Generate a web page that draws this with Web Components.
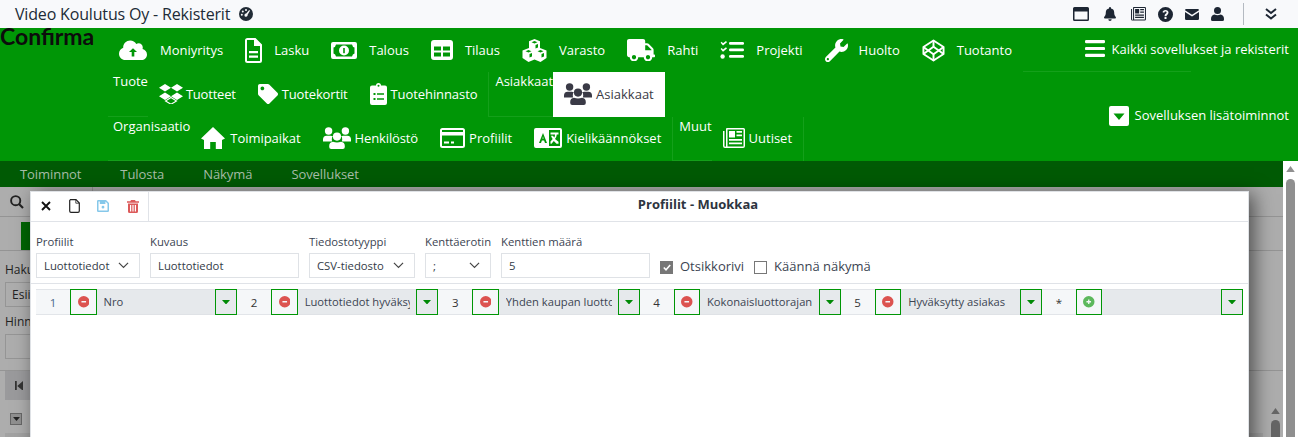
<!DOCTYPE html>
<html lang="fi">
<head>
<meta charset="utf-8">
<title>Profiilit - Muokkaa</title>
<style>
  html, body { margin: 0; height: 437px; overflow: hidden; background: #fff; }
  body { font-family: "Open Sans", sans-serif; font-size: 13px; color: #212b36; position: relative; }
</style>
</head>
<body>
<top-bar></top-bar>
<ribbon-menu>
  <ribbon-row slot="rows">
    <ribbon-item icon="cloud" w="28" gap="13">Moniyritys</ribbon-item>
    <ribbon-item icon="file" w="17" gap="12">Lasku</ribbon-item>
    <ribbon-item icon="money" w="26" gap="12">Talous</ribbon-item>
    <ribbon-item icon="table" w="22" gap="12">Tilaus</ribbon-item>
    <ribbon-item icon="cubes" w="25" gap="12">Varasto</ribbon-item>
    <ribbon-item icon="truck" w="28" gap="12">Rahti</ribbon-item>
    <ribbon-item icon="tasks" w="24" gap="12">Projekti</ribbon-item>
    <ribbon-item icon="wrench" w="23" gap="11">Huolto</ribbon-item>
    <ribbon-item icon="codepen" w="23" gap="12">Tuotanto</ribbon-item>
  </ribbon-row>
  <ribbon-row slot="rows">
    <ribbon-group indent="5">
      <span slot="label">Tuote</span>
      <ribbon-item icon="dropbox" w="24" gap="3" style="letter-spacing:-.2px">Tuotteet</ribbon-item>
      <ribbon-item icon="tag" w="20" gap="4" style="letter-spacing:-.15px">Tuotekortit</ribbon-item>
      <ribbon-item icon="clipboard" w="17" gap="4" style="letter-spacing:-.08px">Tuotehinnasto</ribbon-item>
    </ribbon-group>
    <ribbon-group indent="6" divider>
      <span slot="label">Asiakkaat</span>
      <ribbon-item icon="users" w="28" gap="4" active>Asiakkaat</ribbon-item>
    </ribbon-group>
  </ribbon-row>
  <ribbon-row slot="rows">
    <ribbon-group indent="5">
      <span slot="label">Organisaatio</span>
      <ribbon-item icon="home" w="24" gap="5" style="padding-bottom:2px;letter-spacing:-.05px">Toimipaikat</ribbon-item>
      <ribbon-item icon="users" w="28" gap="4" style="padding-bottom:2px;letter-spacing:-.12px">Henkilöstö</ribbon-item>
      <ribbon-item icon="card" w="25" gap="4" style="padding-bottom:2px">Profiilit</ribbon-item>
      <ribbon-item icon="language" w="28" gap="4" style="padding-bottom:2px">Kielikäännökset</ribbon-item>
    </ribbon-group>
    <ribbon-group indent="6" divider closing>
      <span slot="label">Muut</span>
      <ribbon-item icon="news" w="22" gap="4" style="padding-bottom:2px">Uutiset</ribbon-item>
    </ribbon-group>
  </ribbon-row>
  <ribbon-side slot="side"></ribbon-side>
</ribbon-menu>
<tab-bar></tab-bar>
<page-behind></page-behind>
<page-scrollbar></page-scrollbar>
<edit-dialog></edit-dialog>

<script>
// icon set, all filled with currentColor unless the markup says otherwise
const ICONS = {
  cloud: ['0 0 640 512', '<path fill-rule="evenodd" d="M537.6 226.6c4.1-10.7 6.4-22.4 6.4-34.6 0-53-43-96-96-96-19.7 0-38.1 6-53.3 16.2C367 64.2 315.3 32 256 32c-88.4 0-160 71.6-160 160 0 2.7.1 5.4.2 8.1C40.2 219.8 0 273.2 0 336c0 79.5 64.5 144 144 144h368c70.7 0 128-57.3 128-128 0-61.9-44-113.6-102.4-125.4zM320 210L412 300H350V400H290V300H228Z"/>'],
  file: ['0 0 17 25', '<path fill-rule="evenodd" d="M2.5 0H10.5L17 6.5V22.5A2.5 2.5 0 0 1 14.5 25H2.5A2.5 2.5 0 0 1 0 22.5V2.5A2.5 2.5 0 0 1 2.5 0ZM2 2V23H15V8H9V2ZM4 13H13V15.2H4ZM4 17.5H13V19.7H4Z"/>'],
  money: ['0 0 26 17', '<path fill-rule="evenodd" d="M2 0H24A2 2 0 0 1 26 2V15A2 2 0 0 1 24 17H2A2 2 0 0 1 0 15V2A2 2 0 0 1 2 0ZM5 2.5Q4.5 5 2.5 5.5V11.5Q4.5 12 5 14.5H21Q21.5 12 23.5 11.5V5.5Q21.5 5 21 2.5ZM13 3.5A5 5 0 0 1 13 13.5A5 5 0 0 1 13 3.5Z"/><rect x="12.2" y="6" width="1.6" height="5.2" fill="#009606"/>'],
  table: ['0 0 22 20', '<path fill-rule="evenodd" d="M3 0H19A3 3 0 0 1 22 3V17A3 3 0 0 1 19 20H3A3 3 0 0 1 0 17V3A3 3 0 0 1 3 0ZM3 6.5V10.5H10V6.5ZM12 6.5V10.5H19V6.5ZM3 12.5V16.5H10V12.5ZM12 12.5V16.5H19V12.5Z"/>'],
  cubes: ['0 0 25 23', '<path fill-rule="evenodd" d="M12.5 0L18 2.2V9L24.5 11.5V19L18.5 23L12.5 20.5L6.5 23L.5 19V11.5L7 9V2.2ZM12.5 2L9.5 3.2L12.5 4.4L15.5 3.2ZM13.5 6V9.5L16 8.5V5ZM6.5 11L3.5 12.2L6.5 13.4L9.5 12.2ZM18.5 11L15.5 12.2L18.5 13.4L21.5 12.2ZM7.5 15V18.5L10 17.5V14ZM19.5 15V18.5L22 17.5V14Z"/>'],
  truck: ['0 0 640 512', '<path d="M624 352h-16V243.9c0-12.7-5.1-24.9-14.1-33.9L494 110.1c-9-9-21.2-14.1-33.9-14.1H416V48c0-26.5-21.5-48-48-48H48C21.5 0 0 21.5 0 48v320c0 26.5 21.5 48 48 48h16c0 53 43 96 96 96s96-43 96-96h128c0 53 43 96 96 96s96-43 96-96h48c8.8 0 16-7.2 16-16v-32c0-8.8-7.2-16-16-16zM160 464c-26.5 0-48-21.5-48-48s21.5-48 48-48 48 21.5 48 48-21.5 48-48 48zm320 0c-26.5 0-48-21.5-48-48s21.5-48 48-48 48 21.5 48 48-21.5 48-48 48zm80-208H416V144h44.1l99.9 99.9V256z"/>'],
  tasks: ['0 0 24 18', '<path d="M.6 1.7L1.7.8L3 2.2L6 0L7 1.2L3 4.6ZM.6 7.9L1.7 7L3 8.4L6 6.2L7 7.4L3 10.8Z"/><circle cx="2.6" cy="15.5" r="2.2"/><rect x="9" y="1" width="15" height="2.8" rx="1.2"/><rect x="9" y="7.5" width="15" height="2.8" rx="1.2"/><rect x="9" y="14" width="15" height="2.8" rx="1.2"/>'],
  wrench: ['0 0 512 512', '<path d="M507.73 109.1c-2.24-9.03-13.54-12.09-20.12-5.51l-74.36 74.36-67.88-11.31-11.31-67.88 74.36-74.36c6.62-6.62 3.43-17.9-5.66-20.16-47.38-11.74-99.55.91-136.58 37.93-39.64 39.64-50.55 97.1-34.05 147.2L18.74 402.76c-24.99 24.99-24.99 65.51 0 90.5 24.99 24.99 65.51 24.99 90.5 0l213.21-213.21c50.12 16.71 107.47 5.68 147.37-34.22 37.07-37.07 49.7-89.32 37.91-136.73zM64 472c-13.25 0-24-10.75-24-24 0-13.26 10.75-24 24-24s24 10.74 24 24c0 13.25-10.75 24-24 24z"/>'],
  codepen: ['0 0 24 24', '<g fill="none" stroke="currentColor" stroke-width="2" stroke-linejoin="round"><path d="M12 1.5L22.5 8.3V15.7L12 22.5L1.5 15.7V8.3Z"/><path d="M12 8L17.5 12L12 16L6.5 12Z"/><path d="M12 1.5V8M12 16V22.5M1.5 8.3L6.5 12L1.5 15.7M22.5 8.3L17.5 12L22.5 15.7"/></g>'],
  dropbox: ['0 0 24 20', '<path d="M6 0L12 3.8L6 7.6L0 3.8ZM18 0L24 3.8L18 7.6L12 3.8ZM6 8.4L12 12.2L6 16L0 12.2ZM18 8.4L24 12.2L18 16L12 12.2Z"/><path d="M12 13.5L17.5 17L12 20.3L6.5 17Z" fill="none" stroke="currentColor" stroke-width="1.1"/>'],
  tag: ['0 0 512 512', '<path d="M0 252.118V48C0 21.49 21.49 0 48 0h204.118a48 48 0 0 1 33.941 14.059l211.882 211.882c18.745 18.745 18.745 49.137 0 67.882L293.823 497.941c-18.745 18.745-49.137 18.745-67.882 0L14.059 286.059A48 48 0 0 1 0 252.118zM112 64c-26.51 0-48 21.49-48 48s21.49 48 48 48 48-21.49 48-48-21.49-48-48-48z"/>'],
  clipboard: ['0 0 17 22', '<path fill-rule="evenodd" d="M6 2.5Q6 0 8.5 0T11 2.5H15A2 2 0 0 1 17 4.5V20A2 2 0 0 1 15 22H2A2 2 0 0 1 0 20V4.5A2 2 0 0 1 2 2.5ZM8.5 1.7A1 1 0 0 0 8.5 3.7A1 1 0 0 0 8.5 1.7ZM3.5 10V12H5.5V10ZM7 10.3V11.7H14V10.3ZM3.5 15V17H5.5V15ZM7 15.3V16.7H14V15.3Z"/>'],
  users: ['0 0 28 22', '<circle cx="5.6" cy="4" r="3.7"/><circle cx="22.4" cy="4" r="3.7"/><circle cx="14" cy="9.6" r="4.1"/><path d="M0 14.6V12.6Q0 8.8 3.6 8.8H7.8Q9 8.8 9.8 9.3Q8.8 10.5 8.8 12.2Q8.8 13.4 9.2 14.6ZM28 14.6V12.6Q28 8.8 24.4 8.8H20.2Q19 8.8 18.2 9.3Q19.2 10.5 19.2 12.2Q19.2 13.4 18.8 14.6Z"/><path d="M6.2 20V19Q6.2 15.2 10 14.8Q14 16.3 18 14.8Q21.8 15.2 21.8 19V20Q21.8 22 19.8 22H8.2Q6.2 22 6.2 20Z"/>'],
  home: ['0 0 24 22', '<path d="M12 0L24 11.5L21 13V22H14.8V15H9.2V22H3V13L0 11.5Z"/>'],
  card: ['0 0 25 20', '<path fill-rule="evenodd" d="M2.5 0H22.5A2.5 2.5 0 0 1 25 2.5V17.5A2.5 2.5 0 0 1 22.5 20H2.5A2.5 2.5 0 0 1 0 17.5V2.5A2.5 2.5 0 0 1 2.5 0ZM2 2V4H23V2ZM2 7.5V18H23V7.5ZM4 13.5H9V15.5H4ZM11 13.5H14V15.5H11Z"/>'],
  language: ['0 0 28 20', '<path fill-rule="evenodd" d="M2 0H26A2 2 0 0 1 28 2V18A2 2 0 0 1 26 20H2A2 2 0 0 1 0 18V2A2 2 0 0 1 2 0ZM9 5L5 15H7L7.9 12.6H10.1L11 15H13L9 5ZM9 8.2L9.5 10.8H8.5ZM15 2V18H26V2Z"/><path d="M16.5 4.5H24.5V6.5H22.8Q22.5 9.5 21 11L24.5 13.8V15.8H22.5L19.8 13L17.5 15.8H16.5V13.5L18.7 11Q17.5 9.5 17 7.8H19Q19.6 9 20.3 9.5Q21 8.5 21 6.5H16.5Z"/>'],
  news: ['0 0 22 20', '<path fill-rule="evenodd" d="M4 0H20.5A1.5 1.5 0 0 1 22 1.5V18A2 2 0 0 1 20 20H2A2 2 0 0 1 0 18V3H1.5V18A.5.5 0 0 0 3 18V1A1 1 0 0 1 4 0ZM4.5 1.5V18.5H20.5V1.5ZM6 3H12V9.5H6ZM13.5 3H19V4.8H13.5ZM13.5 6.5H19V8.3H13.5ZM6 11H19V12.8H6ZM6 14.5H19V16.3H6Z"/>'],
  bars: ['0 0 20 17', '<rect width="20" height="3.2" rx="1.2"/><rect y="6.9" width="20" height="3.2" rx="1.2"/><rect y="13.8" width="20" height="3.2" rx="1.2"/>'],
  caretbox: ['0 0 20 20', '<path fill-rule="evenodd" d="M2 0H18A2 2 0 0 1 20 2V18A2 2 0 0 1 18 20H2A2 2 0 0 1 0 18V2A2 2 0 0 1 2 0ZM4.5 7.5L10 14L15.5 7.5Z"/>'],
  gauge: ['0 0 14 14', '<path fill-rule="evenodd" d="M7 0A7 7 0 0 1 7 14A7 7 0 0 1 7 0ZM7 2A1 1 0 0 0 7 4A1 1 0 0 0 7 2ZM3.8 3.5A1 1 0 0 0 3.8 5.5A1 1 0 0 0 3.8 3.5ZM2.8 6.8A1 1 0 0 0 2.8 8.8A1 1 0 0 0 2.8 6.8ZM10.2 3L7.2 6.6A1.6 1.6 0 1 0 8.6 7.8L11 3.8Z"/>'],
  window: ['0 0 16 14', '<path fill-rule="evenodd" d="M1.5 0H14.5A1.5 1.5 0 0 1 16 1.5V12.5A1.5 1.5 0 0 1 14.5 14H1.5A1.5 1.5 0 0 1 0 12.5V1.5A1.5 1.5 0 0 1 1.5 0ZM1.5 4.5V12.5H14.5V4.5Z"/>'],
  bell: ['0 0 12 14', '<path d="M6 0A1 1 0 0 1 7 1V1.5Q10.2 2.2 10.2 5.5C10.2 9 12 9.8 12 10.8Q12 11.5 11 11.5H1Q0 11.5 0 10.8C0 9.8 1.8 9 1.8 5.5Q1.8 2.2 5 1.5V1A1 1 0 0 1 6 0ZM4.3 12.3H7.7A1.7 1.7 0 0 1 4.3 12.3Z"/>'],
  question: ['0 0 15 15', '<path fill-rule="evenodd" d="M7.5 0A7.5 7.5 0 0 1 7.5 15A7.5 7.5 0 0 1 7.5 0ZM7.5 3C5.8 3 4.7 4 4.5 5.3L6.2 5.8C6.4 5 6.8 4.6 7.5 4.6C8.1 4.6 8.6 5 8.6 5.5C8.6 6.5 6.6 6.7 6.6 8.8V9.2H8.4C8.4 7.8 10.5 7.5 10.5 5.4C10.5 4 9.2 3 7.5 3ZM6.5 10.1V12H8.5V10.1Z"/>'],
  envelope: ['0 0 14 11', '<path d="M1.3 0H12.7A1.3 1.3 0 0 1 14 1.3L7 5.8L0 1.3A1.3 1.3 0 0 1 1.3 0ZM0 3L7 7.5L14 3V9.7A1.3 1.3 0 0 1 12.7 11H1.3A1.3 1.3 0 0 1 0 9.7Z"/>'],
  user: ['0 0 13 14', '<circle cx="6.5" cy="3.5" r="3.5"/><path d="M3.5 7.5Q6.5 9 9.5 7.5Q13 8 13 12V12.5A1.5 1.5 0 0 1 11.5 14H1.5A1.5 1.5 0 0 1 0 12.5V12Q0 8 3.5 7.5Z"/>'],
  chevrons: ['0 0 12 12', '<path d="M1 1L6 5L11 1M1 6.5L6 10.5L11 6.5" fill="none" stroke="currentColor" stroke-width="2"/>'],
  times: ['0 0 10 10', '<path d="M1 1L9 9M9 1L1 9" fill="none" stroke="currentColor" stroke-width="1.9"/>'],
  blank: ['0 0 11 14', '<path d="M1.5.7H7L10.3 4V12A1.3 1.3 0 0 1 9 13.3H2A1.3 1.3 0 0 1 .7 12V1.5Z" fill="none" stroke="currentColor" stroke-width="1.2"/><path d="M6.8.7V4.2H10.3" fill="none" stroke="currentColor" stroke-width=".8"/>'],
  save: ['0 0 12 12', '<path fill-rule="evenodd" d="M1.3 0H9L12 3V10.7A1.3 1.3 0 0 1 10.7 12H1.3A1.3 1.3 0 0 1 0 10.7V1.3A1.3 1.3 0 0 1 1.3 0ZM1.5 1.5V10.5H10.5V3.6L8.4 1.5V4H2.8V1.5ZM6 5.8A1.4 1.4 0 0 1 6 8.6A1.4 1.4 0 0 1 6 5.8Z"/>'],
  trash: ['0 0 12 13', '<path fill-rule="evenodd" d="M4 0H8L8.7 1.3H12V2.8H0V1.3H3.3ZM1 3.6H11V11.5A1.5 1.5 0 0 1 9.5 13H2.5A1.5 1.5 0 0 1 1 11.5ZM3 5V11.5H4.2V5ZM5.4 5V11.5H6.6V5ZM7.8 5V11.5H9V5Z"/>'],
  search: ['0 0 14 14', '<circle cx="5.7" cy="5.7" r="4.6" fill="none" stroke="currentColor" stroke-width="1.9"/><path d="M9 9L13 13" stroke="currentColor" stroke-width="2.2"/>'],
  minus: ['0 0 12 12', '<path fill-rule="evenodd" d="M6 0A6 6 0 0 1 6 12A6 6 0 0 1 6 0ZM3.6 5.2V6.8H8.4V5.2Z"/>'],
  plus: ['0 0 12 12', '<path fill-rule="evenodd" d="M6 0A6 6 0 0 1 6 12A6 6 0 0 1 6 0ZM5.3 3.6V5.3H3.6V6.7H5.3V8.4H6.7V6.7H8.4V5.3H6.7V3.6Z"/>'],
  caret: ['0 0 8 4.5', '<path d="M0 0H8L4 4.5Z"/>'],
  angle: ['0 0 12 7', '<path d="M1 1L6 6L11 1" fill="none" stroke="currentColor" stroke-width="1.3"/>'],
  first: ['0 0 9 11', '<rect width="2" height="11"/><path d="M9 0V11L2.5 5.5Z"/>'],
  arrowup: ['0 0 10 7', '<path d="M5 0L10 7H0Z"/>']
};

class AppIcon extends HTMLElement {
  connectedCallback() {
    const [box, body] = ICONS[this.getAttribute('name')];
    const w = this.getAttribute('w') || 16;
    const [, , bw, bh] = box.split(' ').map(Number);
    const h = Math.round(w * bh / bw * 10) / 10;
    this.attachShadow({ mode: 'open' }).innerHTML = `
      <style>
        :host { display: inline-flex; flex: none; width: ${w}px; height: ${h}px; }
        svg { display: block; width: 100%; height: 100%; fill: currentColor; }
      </style>
      <svg viewBox="${box}">${body}</svg>`;
  }
}
customElements.define('app-icon', AppIcon);

class TopBar extends HTMLElement {
  constructor() {
    super();
    this.attachShadow({ mode: 'open' }).innerHTML = `
      <style>
        :host { display: flex; align-items: center; height: 28px; background: #f8f9fb; color: #212b36; padding-left: 15px; box-sizing: border-box; }
        .title { font-size: 16px; white-space: nowrap; letter-spacing: -.17px; }
        app-icon.g { margin-left: 9px; }
        .tools { margin-left: auto; display: flex; align-items: center; color: #1d2633; }
        .rule { width: 1px; height: 22px; background: #b4bac1; margin: 0 21px 0 19px; }
        .end { margin-right: 21px; }
      </style>
      <span class="title">Video Koulutus Oy - Rekisterit</span>
      <app-icon class="g" name="gauge" w="14"></app-icon>
      <div class="tools">
        <app-icon name="window" w="16"></app-icon>
        <app-icon name="bell" w="12" style="margin-left:15px"></app-icon>
        <app-icon name="news" w="15" style="margin-left:15px"></app-icon>
        <app-icon name="question" w="15" style="margin-left:12px"></app-icon>
        <app-icon name="envelope" w="14" style="margin-left:12px"></app-icon>
        <app-icon name="user" w="13" style="margin-left:12px"></app-icon>
        <div class="rule"></div>
        <app-icon class="end" name="chevrons" w="12"></app-icon>
      </div>`;
  }
}
customElements.define('top-bar', TopBar);

class RibbonMenu extends HTMLElement {
  constructor() {
    super();
    this.attachShadow({ mode: 'open' }).innerHTML = `
      <style>
        :host { display: flex; height: 133px; background: #009606; color: #fff; font-size: 13px; }
        .logo { width: 108px; flex: none; height: 44px; color: #0c0c0c; font: 700 23px/17px Lato, sans-serif; box-sizing: border-box; }
        .rows { display: flex; flex-direction: column; flex: none; }
        .side { margin-left: auto; }
      </style>
      <div class="logo">Confirma</div>
      <div class="rows"><slot name="rows"></slot></div>
      <div class="side"><slot name="side"></slot></div>`;
  }
}
customElements.define('ribbon-menu', RibbonMenu);

class RibbonRow extends HTMLElement {
  constructor() {
    super();
    this.attachShadow({ mode: 'open' }).innerHTML = `
      <style>:host { display: flex; height: 44.33px; }</style><slot></slot>`;
  }
}
customElements.define('ribbon-row', RibbonRow);

class RibbonGroup extends HTMLElement {
  connectedCallback() {
    const indent = this.getAttribute('indent') || 5;
    this.attachShadow({ mode: 'open' }).innerHTML = `
      <style>
        :host { display: flex; ${this.hasAttribute('divider') ? 'border-left: 1px solid #14a01a;' : ''} ${this.hasAttribute('closing') ? 'border-right: 1px solid #14a01a;' : ''} }
        .label { padding-left: ${indent}px; line-height: 18px; white-space: nowrap; border-bottom: 1px solid #14a01a; height: 100%; box-sizing: border-box; }
        .items { display: flex; }
      </style>
      <div class="label"><slot name="label"></slot></div>
      <div class="items"><slot></slot></div>`;
  }
}
customElements.define('ribbon-group', RibbonGroup);

class RibbonItem extends HTMLElement {
  connectedCallback() {
    const on = this.hasAttribute('active');
    this.attachShadow({ mode: 'open' }).innerHTML = `
      <style>
        :host { display: flex; align-items: center; gap: ${this.getAttribute('gap') || 4}px; padding: 0 11px; white-space: nowrap; height: 100%; box-sizing: border-box; ${on ? 'background: #fff; color: #3a3a46;' : ''} }
      </style>
      <app-icon name="${this.getAttribute('icon')}" w="${this.getAttribute('w')}"></app-icon><slot></slot>`;
  }
}
customElements.define('ribbon-item', RibbonItem);

class RibbonSide extends HTMLElement {
  constructor() {
    super();
    this.attachShadow({ mode: 'open' }).innerHTML = `
      <style>
        :host { display: flex; flex-direction: column; width: 276px; height: 100%; }
        .a { height: 44px; display: flex; align-items: center; justify-content: flex-end; gap: 7px; padding: 0 10px 3px 0; box-sizing: border-box; white-space: nowrap; position: relative; }
        .a::after { content: ""; position: absolute; left: 0; bottom: 0; width: 168px; height: 1px; background: #14a01a; }
        .b { display: flex; align-items: center; justify-content: flex-end; gap: 6px; padding: 0 10px 0 0; height: 88px; box-sizing: border-box; white-space: nowrap; }
        .b span { margin-top: -3px; }
      </style>
      <div class="a"><app-icon name="bars" w="20"></app-icon>Kaikki sovellukset ja rekisterit</div>
      <div class="b"><app-icon name="caretbox" w="20"></app-icon><span>Sovelluksen lisätoiminnot</span></div>`;
  }
}
customElements.define('ribbon-side', RibbonSide);

class TabBar extends HTMLElement {
  constructor() {
    super();
    this.attachShadow({ mode: 'open' }).innerHTML = `
      <style>
        :host { display: flex; height: 26px; width: 1283px; align-items: center; gap: 39px; padding-left: 20px; box-sizing: border-box; background: #005a04; color: #a8bda8; font-size: 13px; letter-spacing: -.07px; }
      </style>
      <span>Toiminnot</span><span>Tulosta</span><span>Näkymä</span><span>Sovellukset</span>`;
  }
}
customElements.define('tab-bar', TabBar);

// dimmed application page behind the dialog
class PageBehind extends HTMLElement {
  constructor() {
    super();
    this.attachShadow({ mode: 'open' }).innerHTML = `
      <style>
        :host { display: block; width: 1283px; height: 250px; overflow: hidden; background: #adadad; color: #222; font-size: 12px; position: relative; }
        .bar { height: 30px; border-bottom: 1px solid #949494; display: flex; align-items: center; padding-left: 10px; box-sizing: border-box; position: relative; }
        .bar i { position: absolute; left: 92px; top: 0; width: 1px; height: 4px; background: #949494; }
        .actions { height: 34px; border-bottom: 1px solid #949494; box-sizing: border-box; padding: 5px 0 0 21px; }
        .actions b { display: block; width: 40px; height: 28px; background: #006504; }
        .form { height: 120px; padding: 11px 0 0 5px; box-sizing: border-box; border-bottom: 1px solid #949494; line-height: 16px; }
        .box { width: 60px; height: 25px; border: 1px solid #959595; box-sizing: border-box; margin: 4px 0 7px; padding-left: 6px; line-height: 23px; }
        .pager { height: 29px; margin-left: 5px; width: 70px; background: #9a9a9c; display: flex; align-items: center; padding-left: 10px; box-sizing: border-box; color: #333; }
        .chk { width: 12px; height: 12px; margin: 13px 0 0 10px; background: #8f8f8f; border: 1px solid #666; box-sizing: border-box; display: flex; align-items: center; justify-content: center; }
        .head { position: absolute; left: 5px; top: 246px; width: 1258px; height: 6px; background: #a2a2a2; }
        .up { position: absolute; left: 1271px; top: 221px; color: #666; }
        .thumb { position: absolute; left: 1271px; top: 233px; width: 9px; height: 40px; border-radius: 5px 5px 0 0; background: #656565; }
      </style>
      <div class="bar"><app-icon name="search" w="14"></app-icon><i></i></div>
      <div class="actions"><b></b></div>
      <div class="form">Haku<div class="box">Esii</div>Hinn<div class="box"></div></div>
      <div class="pager"><app-icon name="first" w="8"></app-icon></div>
      <div class="chk"><app-icon name="caret" w="7"></app-icon></div>
      <div class="head"></div>
      <app-icon class="up" name="arrowup" w="9"></app-icon>
      <div class="thumb"></div>`;
  }
}
customElements.define('page-behind', PageBehind);

class PageScrollbar extends HTMLElement {
  constructor() {
    super();
    this.attachShadow({ mode: 'open' }).innerHTML = `
      <style>
        :host { display: block; position: absolute; left: 1283px; top: 161px; width: 15px; height: 276px; background: #fff; }
        app-icon { position: absolute; left: 3px; top: 5px; color: #909090; }
        .thumb { position: absolute; left: 3px; top: 18px; width: 9px; height: 260px; border-radius: 5px 5px 0 0; background: #8f8f8f; }
      </style>
      <app-icon name="arrowup" w="9"></app-icon><div class="thumb"></div>`;
  }
}
customElements.define('page-scrollbar', PageScrollbar);

class FormField extends HTMLElement {
  connectedCallback() {
    const w = this.getAttribute('w');
    const select = this.hasAttribute('select');
    this.attachShadow({ mode: 'open' }).innerHTML = `
      <style>
        :host { display: flex; flex-direction: column; width: ${w}px; font-size: 11.3px; color: #3b4452; }
        label { height: 20px; line-height: 17px; white-space: nowrap; }
        .box { height: 25px; border: 1px solid #dfe2e6; box-sizing: border-box; display: flex; align-items: center; justify-content: space-between; padding: 0 10px 0 7px; color: #333b47; white-space: nowrap; }
        app-icon { color: #444; }
      </style>
      <label>${this.getAttribute('label')}</label>
      <div class="box"><span><slot></slot></span>${select ? '<app-icon name="angle" w="11"></app-icon>' : ''}</div>`;
  }
}
customElements.define('form-field', FormField);

class CheckField extends HTMLElement {
  connectedCallback() {
    const on = this.hasAttribute('checked');
    this.attachShadow({ mode: 'open' }).innerHTML = `
      <style>
        :host { display: flex; align-items: center; gap: 7px; font-size: 13px; color: #3b4452; white-space: nowrap; height: 25px; margin-top: 20px; }
        .b { width: 13px; height: 13px; box-sizing: border-box; border: 1px solid #777; background: ${on ? '#777' : '#fff'}; display: flex; align-items: center; justify-content: center; margin-top: 3px; }
        svg { width: 8px; height: 7px; }
      </style>
      <span class="b">${on ? '<svg viewBox="0 0 8 7"><path d="M.8 3.5L3 5.8L7.2 1" fill="none" stroke="#fff" stroke-width="1.6"/></svg>' : ''}</span><slot></slot>`;
  }
}
customElements.define('check-field', CheckField);

class MapCell extends HTMLElement {
  connectedCallback() {
    const add = this.hasAttribute('add');
    this.attachShadow({ mode: 'open' }).innerHTML = `
      <style>
        :host { display: grid; grid-template-columns: 34px 26.5px 1fr 22px; height: 26px; font-size: 11.2px; color: #3b4452; min-width: 0; }
        .num { background: #f5f7f9; border: solid #e2e5e9; border-width: 1px 0; display: flex; align-items: center; justify-content: center; box-sizing: border-box; color: ${this.getAttribute('no') === '1' ? '#4a6a8a' : '#333'}; font-size: 11.5px; }
        .btn { border: 1px solid #009606; box-sizing: border-box; display: flex; align-items: center; justify-content: center; background: #f5f7f9; }
        .name { background: #e6e9ec; border: solid #dfe2e6; border-width: 1px 0; box-sizing: border-box; padding: 0 6px 0 7px; line-height: 24px; overflow: hidden; white-space: nowrap; min-width: 0; }
        .name span { display: block; overflow: hidden; }
        .drop { color: #008a06; background: #e6e9ec; }
      </style>
      <div class="num">${this.getAttribute('no')}</div>
      <div class="btn"><app-icon name="${add ? 'plus' : 'minus'}" w="11.5" style="color:${add ? '#5cb85c' : '#dc5350'}"></app-icon></div>
      <div class="name"><span><slot></slot></span></div>
      <div class="btn drop"><app-icon name="caret" w="8"></app-icon></div>`;
  }
}
customElements.define('map-cell', MapCell);

class EditDialog extends HTMLElement {
  constructor() {
    super();
    this.attachShadow({ mode: 'open' }).innerHTML = `
      <style>
        :host { display: block; position: absolute; left: 30px; top: 191px; width: 1219px; height: 260px; background: #fff; border: 1px solid #dfe2e6; border-bottom: 0; box-sizing: border-box; box-shadow: 5px 3px 18px rgba(0,0,0,.55); }
        .head { display: flex; height: 29px; border-bottom: 1px solid #e0e3e8; box-sizing: content-box; }
        .tools { width: 117px; display: flex; align-items: center; border-right: 1px solid #e0e3e8; flex: none; padding-bottom: 1px; box-sizing: content-box; margin-right: -1px; }
        .title { flex: 1; text-align: center; line-height: 24px; font-size: 13px; font-weight: 700; color: #2d3440; }
        .form { display: flex; align-items: flex-start; gap: 10px; padding: 11px 5px 0; height: 62px; box-sizing: border-box; border-bottom: 1px solid #e0e3e8; }
        .rows { display: grid; grid-template-columns: repeat(6, minmax(0, 1fr)); padding: 5px 5px 0; width: 1207px; box-sizing: content-box; }
      </style>
      <div class="head">
        <div class="tools">
          <app-icon name="times" w="10" style="margin-left:10px;color:#111"></app-icon>
          <app-icon name="blank" w="11" style="margin-left:18px;color:#222"></app-icon>
          <app-icon name="save" w="12" style="margin-left:17px;color:#86c8ea"></app-icon>
          <app-icon name="trash" w="12" style="margin-left:18px;color:#dc5a5a"></app-icon>
        </div>
        <div class="title">Profiilit - Muokkaa</div>
      </div>
      <div class="form">
        <form-field w="104" label="Profiilit" select>Luottotiedot</form-field>
        <form-field w="149" label="Kuvaus">Luottotiedot</form-field>
        <form-field w="106" label="Tiedostotyyppi" select>CSV-tiedosto</form-field>
        <form-field w="66" label="Kenttäerotin" select>;</form-field>
        <form-field w="149" label="Kenttien määrä">5</form-field>
        <check-field checked>Otsikkorivi</check-field>
        <check-field>Käännä näkymä</check-field>
      </div>
      <div class="rows">
        <map-cell no="1">Nro</map-cell>
        <map-cell no="2">Luottotiedot hyväksytty</map-cell>
        <map-cell no="3">Yhden kaupan luottoraja</map-cell>
        <map-cell no="4">Kokonaisluottorajan</map-cell>
        <map-cell no="5">Hyväksytty asiakas</map-cell>
        <map-cell no="*" add></map-cell>
      </div>`;
  }
}
customElements.define('edit-dialog', EditDialog);
</script>
</body>
</html>
